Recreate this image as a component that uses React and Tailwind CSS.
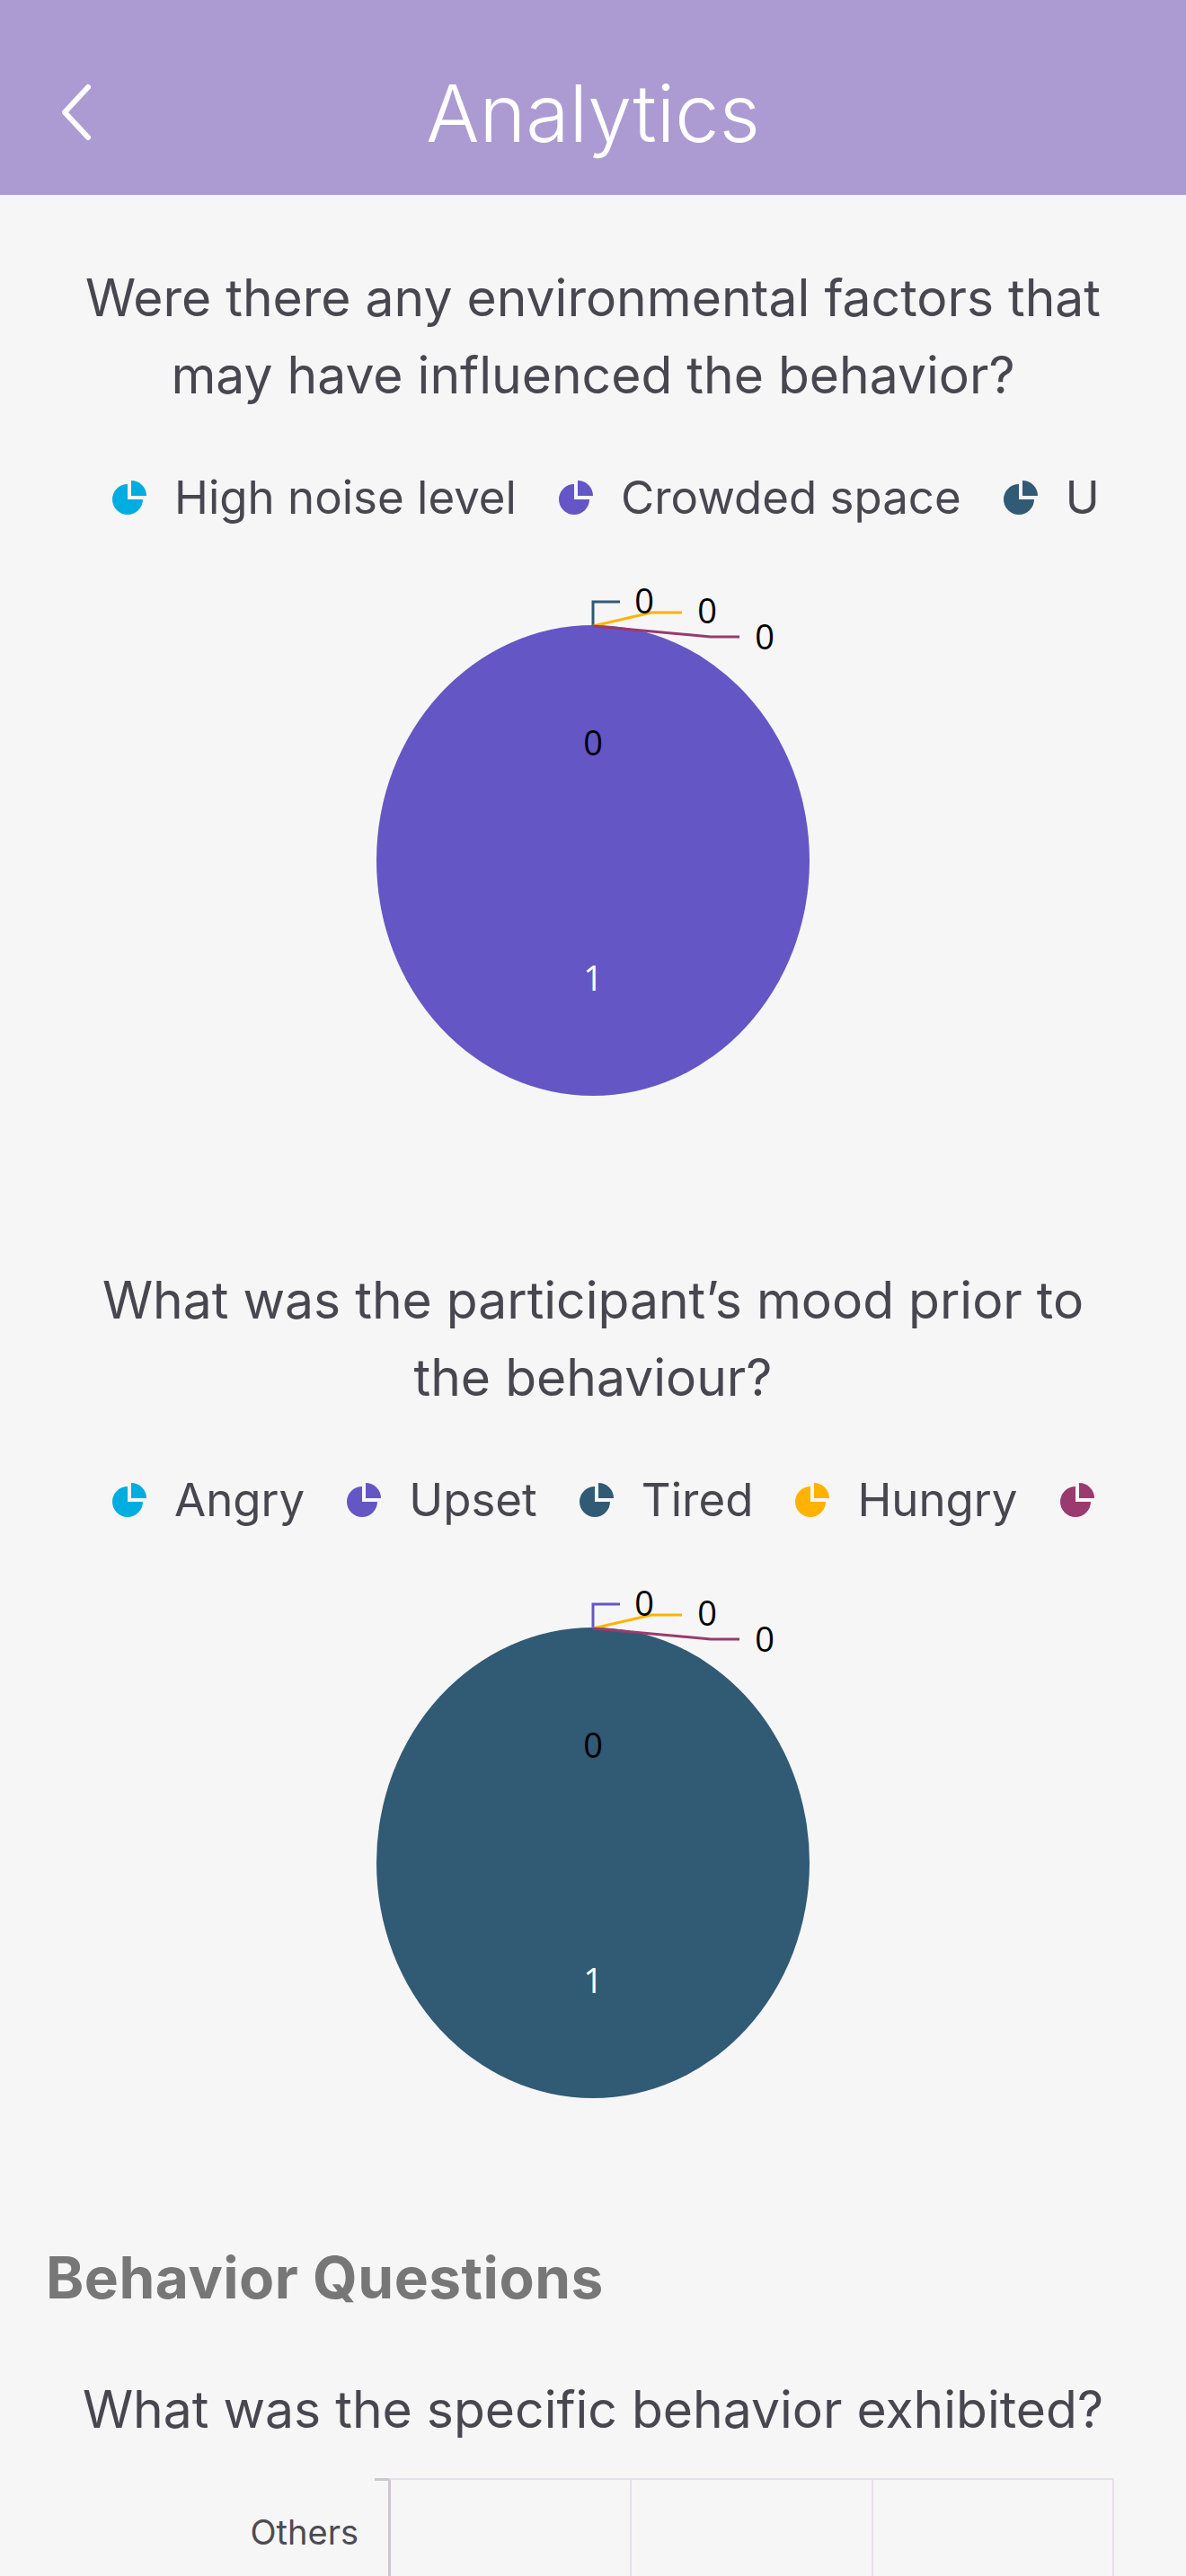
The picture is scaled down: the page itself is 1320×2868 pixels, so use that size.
import React from "react";

const C = {
  cyan: "#00ade0",
  purple: "#6556c5",
  navy: "#315a74",
  yellow: "#ffb300",
  maroon: "#9a3a6e",
};

function PieIcon({ color }) {
  return (
    <svg width="38" height="40" viewBox="0 0 38 40" className="shrink-0">
      <path d="M17 22 L17 5 A17 17 0 1 0 34 22 Z" fill={color} />
      <path d="M21 18 L21 1 A17 17 0 0 1 38 18 Z" fill={color} />
    </svg>
  );
}

function Legend({ items }) {
  return (
    <div className="ml-[125px] w-[1095px] h-[60px] overflow-hidden">
      <div className="flex items-center gap-[47px] whitespace-nowrap h-[60px]">
        {items.map((it) => (
          <div key={it.label} className="flex items-center gap-[31px] shrink-0">
            <PieIcon color={it.color} />
            <span className="text-[51px] leading-[60px] text-[#48464f] font-['Inter',sans-serif]">
              {it.label}
            </span>
          </div>
        ))}
      </div>
    </div>
  );
}

function PieChart({ main, bracket }) {
  const f = "'Open Sans', 'Noto Sans', sans-serif";
  return (
    <svg width="1320" height="720" viewBox="0 0 1320 720" className="block">
      <ellipse cx="660" cy="374" rx="241" ry="262" fill={main} />
      <polyline points="660,113 660,86 690,86" fill="none" stroke={bracket} strokeWidth="3" />
      <polyline points="660,113 725,98 759,98" fill="none" stroke={C.yellow} strokeWidth="3" />
      <polyline points="660,113 791,125 823,125" fill="none" stroke={C.maroon} strokeWidth="3" />
      <text x="717" y="99" textAnchor="middle" fontSize="38" fontFamily={f} fill="#000">0</text>
      <text x="787" y="110" textAnchor="middle" fontSize="38" fontFamily={f} fill="#000">0</text>
      <text x="851" y="139" textAnchor="middle" fontSize="38" fontFamily={f} fill="#000">0</text>
      <text x="660" y="257" textAnchor="middle" fontSize="38" fontFamily={f} fill="#000">0</text>
      <text x="660" y="519" textAnchor="middle" fontSize="38" fontFamily={f} fill="#fff">1</text>
    </svg>
  );
}

function Question({ children, className = "" }) {
  return (
    <h2
      className={
        "px-[90px] text-center text-[57px] leading-[86px] font-normal text-[#48464f] font-['Inter',sans-serif] " +
        className
      }
    >
      {children}
    </h2>
  );
}

export default function App() {
  return (
    <div className="w-[1320px] min-h-[2868px] bg-[#f6f6f6] overflow-hidden">
      <header className="h-[217px] bg-[#ac9bd2] flex items-center pt-[34px] relative">
        <div className="w-[140px] flex items-center pl-[66px]">
          <svg width="40" height="66" viewBox="0 0 40 66">
            <polyline
              points="32,4 6,32 32,60"
              fill="none"
              stroke="#fff"
              strokeWidth="6"
              strokeLinecap="round"
              strokeLinejoin="round"
            />
          </svg>
        </div>
        <h1 className="flex-1 text-center pr-[140px] text-[88px] leading-[100px] font-light text-white font-['Inter',sans-serif]">
          Analytics
        </h1>
      </header>

      <Question className="mt-[72px]">
        Were there any environmental factors that may have influenced the behavior?
      </Question>
      <div className="mt-[63px]">
        <Legend
          items={[
            { label: "High noise level", color: C.cyan },
            { label: "Crowded space", color: C.purple },
            { label: "Unfamiliar environment", color: C.navy },
            { label: "Other", color: C.yellow },
          ]}
        />
      </div>
      <PieChart main={C.purple} bracket={C.navy} />

      <Question className="mt-[101px]">
        What was the participant’s mood prior to the behaviour?
      </Question>
      <div className="mt-[63px]">
        <Legend
          items={[
            { label: "Angry", color: C.cyan },
            { label: "Upset", color: C.purple },
            { label: "Tired", color: C.navy },
            { label: "Hungry", color: C.yellow },
            { label: "Anxious", color: C.maroon },
          ]}
        />
      </div>
      <PieChart main={C.navy} bracket={C.purple} />

      <h3 className="mt-[78px] pl-[51px] text-[64px] leading-[76px] font-bold text-[#777777] font-['Inter',sans-serif] tracking-[0.5px]">
        Behavior Questions
      </h3>

      <Question className="mt-[66px]">What was the specific behavior exhibited?</Question>

      <div className="mt-[33px] flex h-[200px]">
        <div className="w-[432px] shrink-0 flex flex-col">
          <div className="flex justify-end">
            <div className="w-[15px] h-[3px] bg-[#cdc6d2]" />
          </div>
          <div className="pt-[34px] pr-[33px] text-right text-[38px] leading-[46px] text-[#4d4b52] font-['Inter',sans-serif]">
            Others
          </div>
        </div>
        <div className="w-[808px] border-l-[3px] border-l-[#cdc6d2] border-t-[2px] border-t-[#e6dfe9] grid grid-cols-3">
          <div className="border-r-[2px] border-r-[#e6dfe9]" />
          <div className="border-r-[2px] border-r-[#e6dfe9]" />
          <div className="border-r-[2px] border-r-[#e6dfe9]" />
        </div>
      </div>
    </div>
  );
}
